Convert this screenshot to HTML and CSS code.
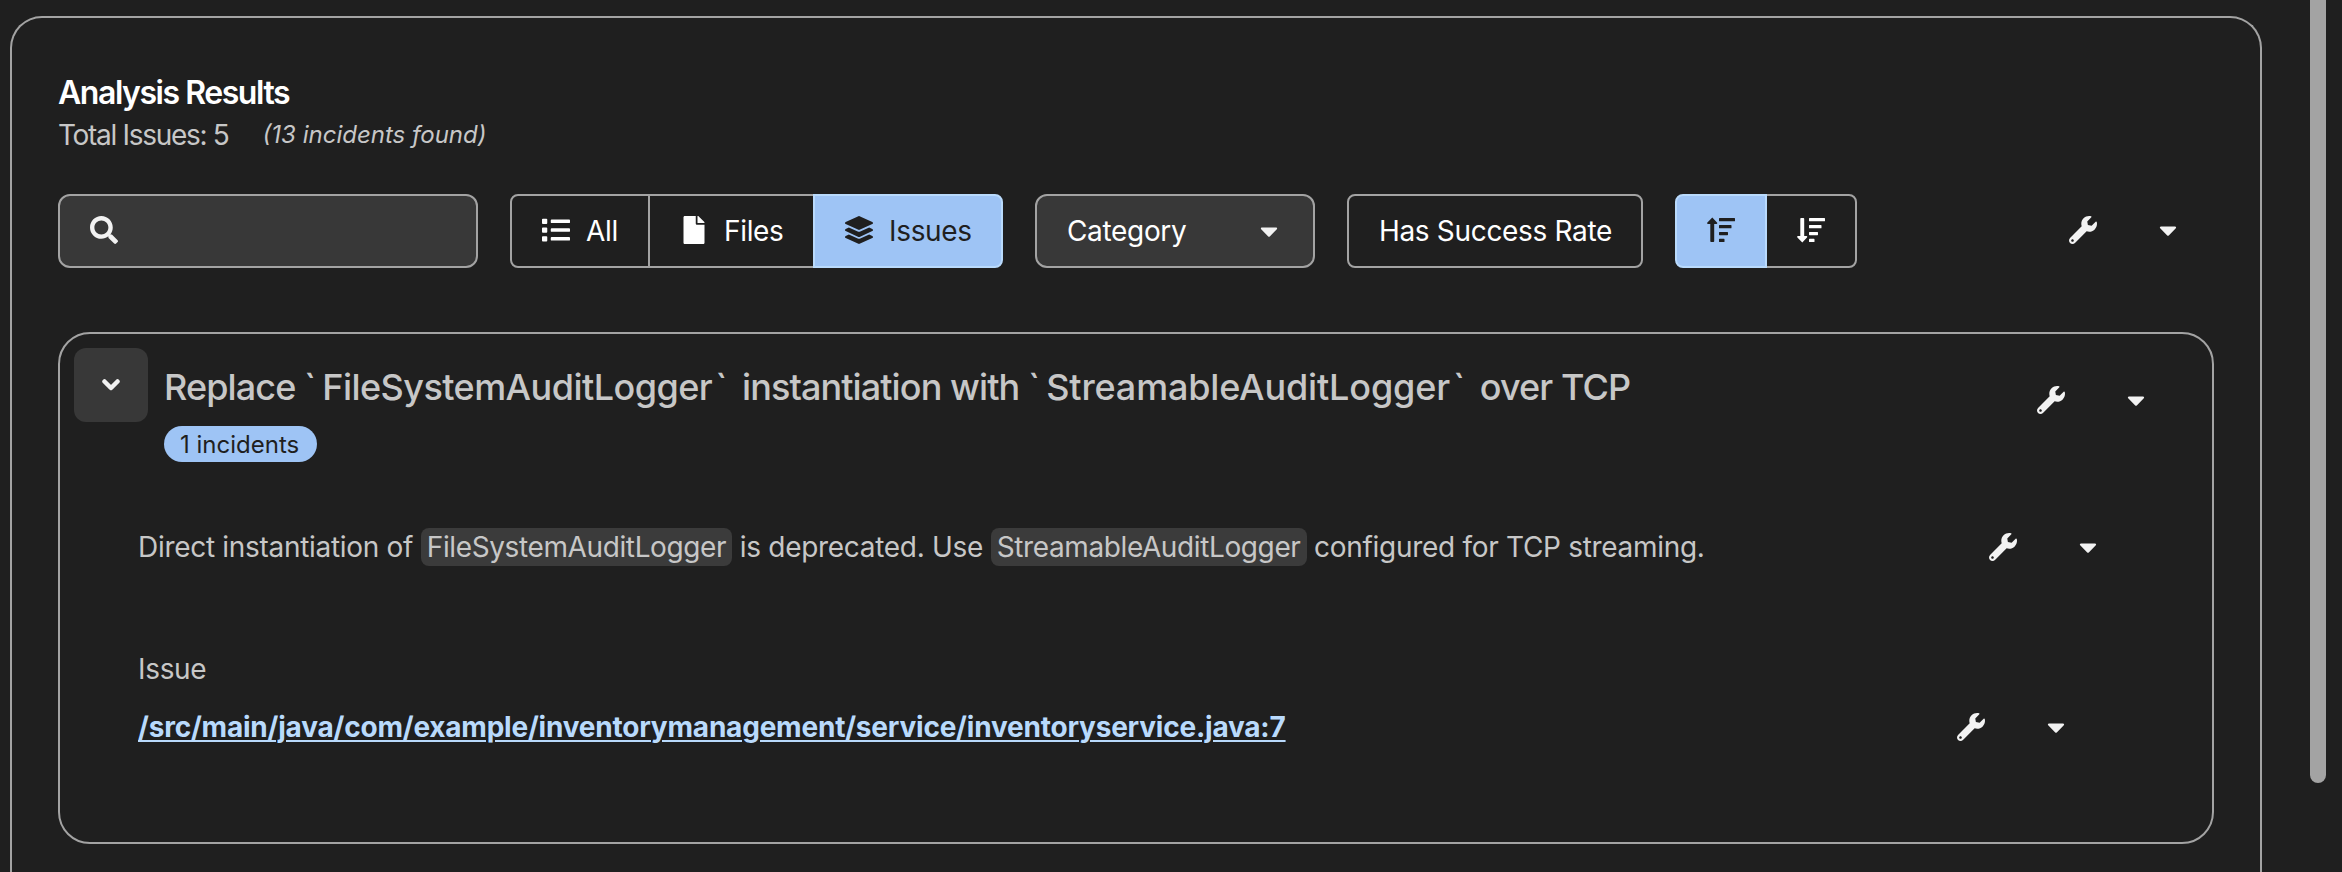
FILE: index.html
```html
<!DOCTYPE html>
<html lang="en">
<head>
<meta charset="utf-8">
<title>Analysis Results</title>
<link rel="stylesheet" href="styles.css">
</head>
<body>
<svg class="defs" aria-hidden="true">
  <symbol id="wrench" viewBox="0 0 512 512"><path d="M507.73 109.1c-2.24-9.03-13.54-12.09-20.12-5.51l-74.36 74.36-67.88-11.31-11.31-67.88 74.36-74.36c6.62-6.62 3.43-17.9-5.66-20.16-47.38-11.74-99.55.91-136.58 37.93-39.64 39.64-50.55 97.1-34.05 147.2L18.74 402.76c-24.99 24.99-24.99 65.51 0 90.5 24.99 24.99 65.51 24.99 90.5 0l213.21-213.21c50.12 16.71 107.47 5.68 147.37-34.22 37.07-37.07 49.7-89.32 37.91-136.73zM64 472c-13.25 0-24-10.75-24-24 0-13.26 10.75-24 24-24s24 10.74 24 24c0 13.25-10.75 24-24 24z"/></symbol>
  <symbol id="caret" viewBox="0 0 320 512"><path d="M31.3 192h257.3c17.8 0 26.7 21.5 14.1 34.1L174.1 354.8c-7.8 7.8-20.5 7.8-28.3 0L17.2 226.1C4.6 213.5 13.5 192 31.3 192z"/></symbol>
</svg>
<main class="results">
  <header class="heading">
    <h1 class="title">Analysis Results</h1>
    <p class="totals"><span class="total">Total Issues: 5</span><em class="found">(13 incidents found)</em></p>
  </header>
  <div class="toolbar">
    <div class="search"><svg class="icon" viewBox="0 0 512 512"><path d="M505 442.7L405.3 343c-4.5-4.5-10.6-7-17-7H372c27.6-35.3 44-79.7 44-128C416 93.1 322.9 0 208 0S0 93.1 0 208s93.1 208 208 208c48.3 0 92.7-16.4 128-44v16.3c0 6.4 2.5 12.5 7 17l99.7 99.7c9.4 9.4 24.6 9.4 33.9 0l28.3-28.3c9.4-9.4 9.4-24.6.1-34zM208 336c-70.7 0-128-57.2-128-128 0-70.7 57.2-128 128-128 70.7 0 128 57.2 128 128 0 70.7-57.2 128-128 128z"/></svg></div>
    <div class="group view">
      <button class="toggle all"><svg class="icon" viewBox="0 0 512 512"><path d="M80 368H16a16 16 0 0 0-16 16v64a16 16 0 0 0 16 16h64a16 16 0 0 0 16-16v-64a16 16 0 0 0-16-16zm0-320H16A16 16 0 0 0 0 64v64a16 16 0 0 0 16 16h64a16 16 0 0 0 16-16V64a16 16 0 0 0-16-16zm0 160H16a16 16 0 0 0-16 16v64a16 16 0 0 0 16 16h64a16 16 0 0 0 16-16v-64a16 16 0 0 0-16-16zm416 176H176a16 16 0 0 0-16 16v32a16 16 0 0 0 16 16h320a16 16 0 0 0 16-16v-32a16 16 0 0 0-16-16zm0-320H176a16 16 0 0 0-16 16v32a16 16 0 0 0 16 16h320a16 16 0 0 0 16-16V80a16 16 0 0 0-16-16zm0 160H176a16 16 0 0 0-16 16v32a16 16 0 0 0 16 16h320a16 16 0 0 0 16-16v-32a16 16 0 0 0-16-16z"/></svg><span>All</span></button>
      <button class="toggle files"><svg class="icon icon-file" viewBox="0 0 384 512"><path d="M224 136V0H24C10.7 0 0 10.7 0 24v464c0 13.3 10.7 24 24 24h336c13.3 0 24-10.7 24-24V160H248c-13.2 0-24-10.8-24-24zm160-14.1v6.1H256V0h6.1c6.4 0 12.5 2.5 17 7l97.9 98c4.5 4.5 7 10.6 7 16.9z"/></svg><span>Files</span></button>
      <button class="toggle issues selected"><svg class="icon" viewBox="0 0 512 512"><path d="M12.41 148.02l232.94 105.67c6.8 3.09 14.49 3.09 21.29 0l232.94-105.67c16.55-7.51 16.55-32.52 0-40.03L266.65 2.31a25.607 25.607 0 0 0-21.29 0L12.41 107.98c-16.55 7.51-16.55 32.53 0 40.04zm487.18 88.28l-58.09-26.33-161.64 73.27c-7.56 3.43-15.59 5.17-23.86 5.17s-16.29-1.74-23.86-5.17L70.51 209.97l-58.1 26.33c-16.55 7.5-16.55 32.5 0 40l232.94 105.59c6.8 3.08 14.49 3.08 21.29 0L499.59 276.3c16.55-7.5 16.55-32.5 0-40zm0 127.8l-57.87-26.23-161.86 73.37c-7.56 3.43-15.59 5.17-23.86 5.17s-16.29-1.74-23.86-5.17L70.29 337.87 12.41 364.1c-16.55 7.5-16.55 32.5 0 40l232.94 105.59c6.8 3.08 14.49 3.08 21.29 0L499.59 404.1c16.55-7.5 16.55-32.5 0-40z"/></svg><span>Issues</span></button>
    </div>
    <button class="category"><span>Category</span><svg class="icon icon-caret"><use href="#caret"/></svg></button>
    <div class="group"><button class="toggle rate"><span>Has Success Rate</span></button></div>
    <div class="group sort">
      <button class="toggle selected"><svg class="icon" viewBox="0 0 28 28"><path d="M5.3 1.4 10 6.5c.6.7.2 1.500-.6 1.500H7.200v17.200a.8.8 0 0 1-.8.8H4.100a.8.8 0 0 1-.8-.8V8H1C.2 8-.2 7.200.4 6.500Z"/><path d="M12.600 2h14.800a.6.6 0 0 1 .6.6v2.100a.6.6 0 0 1-.6.6H12.600a.6.6 0 0 1-.6-.6V2.600a.6.6 0 0 1 .6-.6ZM12.600 9h11.300a.6.6 0 0 1 .6.6v2.100a.6.6 0 0 1-.6.6H12.600a.6.6 0 0 1-.6-.6V9.600a.6.6 0 0 1 .6-.6ZM12.600 15.900h7.800a.6.6 0 0 1 .6.6v2.100a.6.6 0 0 1-.6.6h-7.800a.6.6 0 0 1-.6-.6v-2.100a.6.6 0 0 1 .6-.6ZM12.600 22.800h4.300a.6.6 0 0 1 .6.6v2.100a.6.6 0 0 1-.6.6h-4.300a.6.6 0 0 1-.6-.6v-2.100a.6.6 0 0 1 .6-.6Z"/></svg></button>
      <button class="toggle"><svg class="icon" viewBox="0 0 28 28"><path d="M5.300 26.600 10 21.500c.6-.7.2-1.500-.6-1.500H7.200V2.800a.8.8 0 0 0-.8-.8H4.100a.8.8 0 0 0-.8.8V20H1c-.8 0-1.200.8-.6 1.500Z"/><path d="M12.600 2h14.800a.6.6 0 0 1 .6.6v2.100a.6.6 0 0 1-.6.6H12.600a.6.6 0 0 1-.6-.6V2.600a.6.6 0 0 1 .6-.6ZM12.600 9h11.300a.6.6 0 0 1 .6.6v2.100a.6.6 0 0 1-.6.6H12.600a.6.6 0 0 1-.6-.6V9.600a.6.6 0 0 1 .6-.6ZM12.600 15.900h7.800a.6.6 0 0 1 .6.6v2.100a.6.6 0 0 1-.6.6h-7.800a.6.6 0 0 1-.6-.6v-2.100a.6.6 0 0 1 .6-.6ZM12.600 22.800h4.300a.6.6 0 0 1 .6.6v2.100a.6.6 0 0 1-.6.6h-4.300a.6.6 0 0 1-.6-.6v-2.100a.6.6 0 0 1 .6-.6Z"/></svg></button>
    </div>
    <div class="actions toolbar-actions"><svg class="icon"><use href="#wrench"/></svg><svg class="icon icon-caret"><use href="#caret"/></svg></div>
  </div>
  <section class="issue-card">
    <div class="card-head">
      <button class="expand"><svg class="chevron" viewBox="0 0 18 12"><path d="M2.500 2.500 9 9l6.500-6.500"/></svg></button>
      <div class="card-title">
        <h2 class="name">Replace <span class="tick">`</span><span class="type">FileSystemAuditLogger</span><span class="tick close">`</span> instantiation with <span class="tick">`</span><span class="type loose">StreamableAuditLogger</span><span class="tick close">`</span> over TCP</h2>
        <span class="badge"><span>1 incidents</span></span>
      </div>
      <div class="actions"><svg class="icon"><use href="#wrench"/></svg><svg class="icon icon-caret"><use href="#caret"/></svg></div>
    </div>
    <div class="row description">
      <p class="text">Direct instantiation of <code>FileSystemAuditLogger</code> is deprecated. Use <code>StreamableAuditLogger</code> configured for TCP streaming.</p>
      <div class="actions"><svg class="icon"><use href="#wrench"/></svg><svg class="icon icon-caret"><use href="#caret"/></svg></div>
    </div>
    <p class="label">Issue</p>
    <div class="row location">
      <a class="link" href="#">/src/main/java/com/example/inventorymanagement/service/inventoryservice.java:7</a>
      <div class="actions"><svg class="icon"><use href="#wrench"/></svg><svg class="icon icon-caret"><use href="#caret"/></svg></div>
    </div>
  </section>
</main>
<div class="scrollbar"></div>
</body>
</html>
```
FILE: styles.css
```css
* { box-sizing: border-box; }
html, body { height: 100%; margin: 0; }
body {
  display: flex;
  align-items: flex-start;
  overflow: hidden;
  background: #1f1f1f;
  color: #c7c7c7;
  font: 28px/42px Inter, "Liberation Sans", sans-serif;
  letter-spacing: -0.33px;
}
h1, h2, p { margin: 0; }
button { padding: 0; border: 0; background: none; color: #fff; font: inherit; letter-spacing: inherit; white-space: nowrap; }
.defs { display: none; }
.icon { display: block; flex: none; width: 28px; height: 28px; fill: currentColor; }
.icon-file { width: 22px; }
.icon-caret { width: 18px; }

.results {
  flex: none;
  width: 2252px;
  height: 856px;
  margin: 16px 0 0 10px;
  padding: 54px 46px 0;
  border: 2px solid #a3a3a3;
  border-bottom: 0;
  border-radius: 32px 32px 0 0;
}
.heading { height: 122px; }
.title { color: #fff; font-size: 32px; line-height: 42px; font-weight: 600; letter-spacing: -1.45px; }
.totals { display: flex; gap: 34px; line-height: 42px; }
.total { letter-spacing: -1.3px; }
.found { font-size: 24px; letter-spacing: 0; }

.toolbar { display: flex; align-items: center; gap: 32px; height: 74px; }
.search {
  display: flex;
  align-items: center;
  width: 420px;
  height: 74px;
  padding: 0 0 2px 30px;
  border: 2px solid #a3a3a3;
  border-radius: 12px;
  background: #383838;
  color: #f2f2f2;
}
.group { display: flex; }
.toggle {
  display: flex;
  align-items: center;
  gap: 16px;
  height: 74px;
  padding: 0 30px;
  border: 2px solid #a3a3a3;
  margin-left: -2px;
}
.toggle:first-child { margin-left: 0; border-radius: 8px 0 0 8px; }
.toggle:last-child { border-radius: 0 8px 8px 0; }
.toggle:only-child { border-radius: 8px; }
.toggle .icon { margin-bottom: 2px; }
.toggle.selected { position: relative; border-color: #b9dafc; background: #9ec4f5; color: #1f1f1f; }
.all { width: 140px; }
.files { width: 167px; padding-left: 33px; gap: 19px; }
.issues { width: 190px; }
.category {
  display: flex;
  align-items: center;
  justify-content: space-between;
  width: 280px;
  height: 74px;
  padding: 0 35px 0 30px;
  border: 2px solid #a3a3a3;
  border-radius: 12px;
  background: #383838;
}
.rate { width: 296px; }
.sort .toggle { width: 92px; }
.category .icon { color: #f2f2f2; }

.actions { display: flex; gap: 62px; margin-left: auto; color: #f2f2f2; }
.toolbar-actions { margin: 0 37px 2px auto; }

.issue-card {
  width: 2156px;
  height: 512px;
  margin-top: 64px;
  padding: 14px;
  border: 2px solid #a3a3a3;
  border-radius: 32px;
}
.card-head { display: flex; height: 146px; }
.expand {
  display: flex;
  align-items: center;
  justify-content: center;
  width: 74px;
  height: 74px;
  border-radius: 12px;
  background: #383838;
}
.chevron { width: 18px; height: 12px; fill: none; stroke: #f2f2f2; stroke-width: 4.5; stroke-linecap: round; stroke-linejoin: round; }
.card-title { padding: 14px 0 0 16px; }
.name { font-size: 36px; line-height: 50px; font-weight: 500; letter-spacing: -0.9px; white-space: nowrap; }
.type { letter-spacing: -0.55px; }
.type.loose { letter-spacing: -0.15px; }
.tick { letter-spacing: 6px; }
.tick.close { margin-left: 3px; }
.badge {
  display: flex;
  width: 153px;
  height: 36px;
  margin-top: 14px;
  padding-left: 16px;
  border-radius: 18px;
  background: #9ec4f5;
  color: #1f1f1f;
  font-size: 24px;
  line-height: 37px;
  letter-spacing: 0;
}
.card-head .actions { margin: 38px 53px 0 auto; }
.row { display: flex; align-items: center; padding-left: 64px; }
.description { height: 106px; padding-right: 101px; }
.text { white-space: nowrap; letter-spacing: -0.3px; }
code { padding: 2px 6px; border-radius: 8px; background: #3b3b3b; font: inherit; letter-spacing: -0.38px; }
.label { height: 50px; margin-top: 48px; padding: 0 64px; }
.location { height: 58px; padding-right: 133px; }
.link { color: #b9dafc; font-weight: 700; letter-spacing: -0.21px; text-decoration: underline; text-decoration-thickness: 2px; text-underline-offset: 3px; }
.scrollbar { flex: none; width: 16px; height: 783px; margin-left: 48px; border-radius: 0 0 8px 8px; background: #a3a3a3; }
```
